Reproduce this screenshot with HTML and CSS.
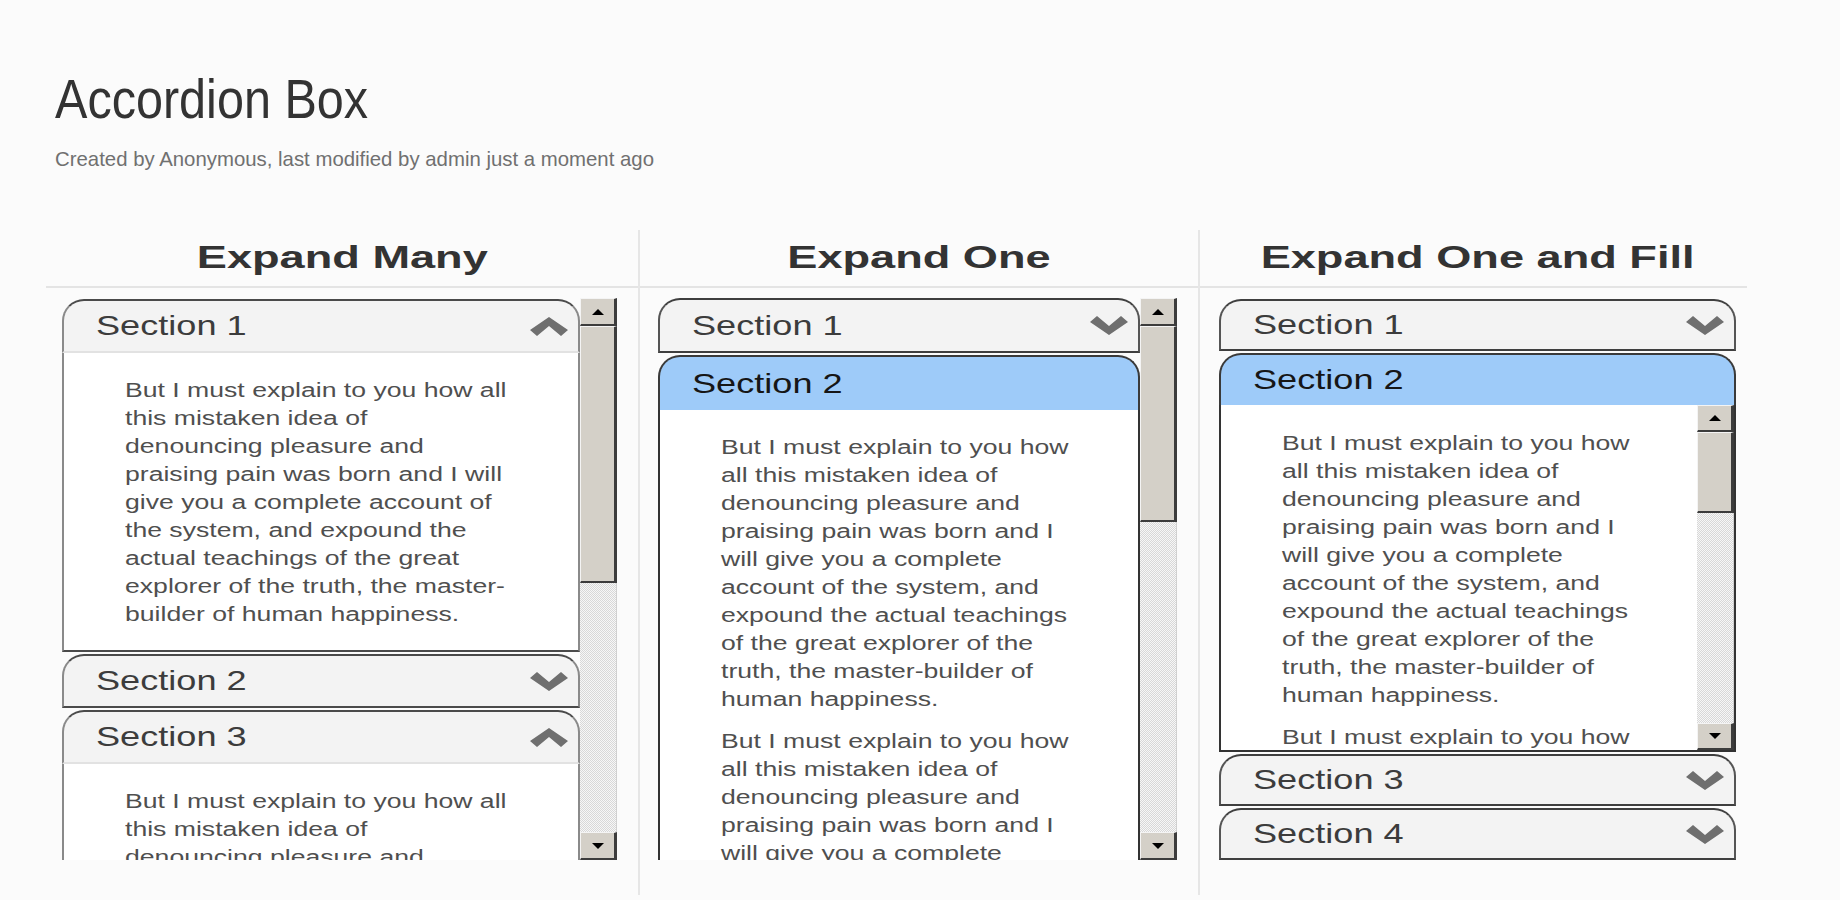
FILE: index.html
```html
<!DOCTYPE html>
<html lang="en">
<head>
<meta charset="utf-8">
<title>Accordion Box</title>
<link rel="stylesheet" href="styles.css">
</head>
<body>
<main class="page">
  <h1 class="title">Accordion Box</h1>
  <p class="meta">Created by Anonymous, last modified by admin just a moment ago</p>

  <div class="board">
    <!-- Column 1 -->
    <section class="col col-many">
      <h2 class="col-head"><span>Expand Many</span></h2>
      <div class="col-body">
        <div class="widget w-many">
          <div class="stack">
            <div class="sec open">
              <div class="sec-head">
                <span class="label">Section 1</span>
                <svg class="chev" viewBox="0 0 38 19"><polygon points="0,13 19,0 38,13 31,19 19,9 7,19"/></svg>
              </div>
              <div class="sec-body">
                <p class="txt">But I must explain to you how all<br>this mistaken idea of<br>denouncing pleasure and<br>praising pain was born and I will<br>give you a complete account of<br>the system, and expound the<br>actual teachings of the great<br>explorer of the truth, the master-<br>builder of human happiness.</p>
              </div>
            </div>
            <div class="sec closed">
              <div class="sec-head">
                <span class="label">Section 2</span>
                <svg class="chev" viewBox="0 0 38 19"><polygon points="0,6 7,0 19,10 31,0 38,6 19,19"/></svg>
              </div>
            </div>
            <div class="sec open">
              <div class="sec-head">
                <span class="label">Section 3</span>
                <svg class="chev" viewBox="0 0 38 19"><polygon points="0,13 19,0 38,13 31,19 19,9 7,19"/></svg>
              </div>
              <div class="sec-body">
                <p class="txt">But I must explain to you how all<br>this mistaken idea of<br>denouncing pleasure and</p>
              </div>
            </div>
          </div>
          <div class="sbar">
            <div class="sb-btn"><svg class="arrow" viewBox="0 0 12 6"><polygon points="0,6 6,0 12,6"/></svg></div>
            <div class="sb-thumb t-many"></div>
            <div class="sb-track"></div>
            <div class="sb-btn"><svg class="arrow" viewBox="0 0 12 6"><polygon points="0,0 12,0 6,6"/></svg></div>
          </div>
        </div>
      </div>
    </section>

    <!-- Column 2 -->
    <section class="col col-one">
      <h2 class="col-head"><span>Expand One</span></h2>
      <div class="col-body">
        <div class="widget w-one">
          <div class="stack">
            <div class="sec closed">
              <div class="sec-head">
                <span class="label">Section 1</span>
                <svg class="chev" viewBox="0 0 38 19"><polygon points="0,6 7,0 19,10 31,0 38,6 19,19"/></svg>
              </div>
            </div>
            <div class="sec sel">
              <div class="sec-head">
                <span class="label">Section 2</span>
              </div>
              <div class="sec-body">
                <p class="txt">But I must explain to you how<br>all this mistaken idea of<br>denouncing pleasure and<br>praising pain was born and I<br>will give you a complete<br>account of the system, and<br>expound the actual teachings<br>of the great explorer of the<br>truth, the master-builder of<br>human happiness.</p>
                <p class="txt">But I must explain to you how<br>all this mistaken idea of<br>denouncing pleasure and<br>praising pain was born and I<br>will give you a complete</p>
              </div>
            </div>
          </div>
          <div class="sbar">
            <div class="sb-btn"><svg class="arrow" viewBox="0 0 12 6"><polygon points="0,6 6,0 12,6"/></svg></div>
            <div class="sb-thumb t-one"></div>
            <div class="sb-track"></div>
            <div class="sb-btn"><svg class="arrow" viewBox="0 0 12 6"><polygon points="0,0 12,0 6,6"/></svg></div>
          </div>
        </div>
      </div>
    </section>

    <!-- Column 3 -->
    <section class="col col-fill">
      <h2 class="col-head"><span>Expand One and Fill</span></h2>
      <div class="col-body">
        <div class="widget w-fill">
          <div class="stack">
            <div class="sec closed">
              <div class="sec-head">
                <span class="label">Section 1</span>
                <svg class="chev" viewBox="0 0 38 19"><polygon points="0,6 7,0 19,10 31,0 38,6 19,19"/></svg>
              </div>
            </div>
            <div class="sec sel">
              <div class="sec-head">
                <span class="label">Section 2</span>
              </div>
              <div class="sec-body fill-body">
                <div class="fill-text">
                  <p class="txt">But I must explain to you how<br>all this mistaken idea of<br>denouncing pleasure and<br>praising pain was born and I<br>will give you a complete<br>account of the system, and<br>expound the actual teachings<br>of the great explorer of the<br>truth, the master-builder of<br>human happiness.</p>
                  <p class="txt">But I must explain to you how</p>
                </div>
                <div class="sbar mini">
                  <div class="sb-btn"><svg class="arrow" viewBox="0 0 12 6"><polygon points="0,6 6,0 12,6"/></svg></div>
                  <div class="sb-thumb t-fill"></div>
                  <div class="sb-track"></div>
                  <div class="sb-btn"><svg class="arrow" viewBox="0 0 12 6"><polygon points="0,0 12,0 6,6"/></svg></div>
                </div>
              </div>
            </div>
            <div class="sec closed">
              <div class="sec-head">
                <span class="label">Section 3</span>
                <svg class="chev" viewBox="0 0 38 19"><polygon points="0,6 7,0 19,10 31,0 38,6 19,19"/></svg>
              </div>
            </div>
            <div class="sec closed">
              <div class="sec-head">
                <span class="label">Section 4</span>
                <svg class="chev" viewBox="0 0 38 19"><polygon points="0,6 7,0 19,10 31,0 38,6 19,19"/></svg>
              </div>
            </div>
          </div>
        </div>
      </div>
    </section>
  </div>
</main>
</body>
</html>
```

FILE: styles.css
```css
html, body {
  margin: 0;
  padding: 0;
}

body {
  background: #fbfbfb;
  font-family: "Liberation Sans", Arial, sans-serif;
  color: #333;
  width: 1840px;
  height: 900px;
  overflow: hidden;
}

.page {
  padding: 67px 0 0 46px;
}

.title {
  margin: 0 0 0 9px;
  font-size: 56px;
  line-height: 64px;
  font-weight: normal;
  color: #333;
  width: max-content;
  transform: scaleX(0.867);
  transform-origin: left center;
}

.meta {
  margin: 16px 0 0 9px;
  font-size: 21px;
  line-height: 24px;
  color: #707070;
  width: max-content;
  transform: scaleX(0.97);
  transform-origin: left center;
}

/* board of three columns */
.board {
  margin-top: 59px;
  display: grid;
  grid-template-columns: 592px 560px 549px;
  height: 665px;
}

.col {
  display: flex;
  flex-direction: column;
  min-width: 0;
}

.col + .col {
  border-left: 2px solid #e6e6e6;
}

.col-head {
  margin: 0;
  box-sizing: border-box;
  height: 58px;
  padding-top: 7px;
  border-bottom: 2px solid #e4e4e4;
  text-align: center;
  font-size: 30.5px;
  line-height: 40px;
  font-weight: bold;
  color: #333;
}

.col-head span {
  display: inline-block;
  transform: scaleX(1.48);
  transform-origin: center center;
}

.col-fill .col-head {
  padding-left: 8px;
}

.col-body {
  padding-top: 10px;
}

.col-many .col-body { padding-left: 16px; }
.col-one .col-body { padding-left: 18px; }
.col-fill .col-body { padding-left: 19px; padding-top: 11px; }

/* accordion widget */
.widget {
  display: flex;
  overflow: hidden;
}

.w-many {
  width: 555px;
  height: 562px;
  --hh: 50px;
  --side: #8a8a8a;
  --top: #4a4a4a;
}

.w-one {
  width: 519px;
  height: 562px;
  --hh: 51px;
  --side: #555;
  --top: #3f3f3f;
}

.w-fill {
  width: 517px;
  --hh: 48px;
  --side: #555;
  --top: #3f3f3f;
}

.stack {
  flex: 1;
  min-width: 0;
  display: flex;
  flex-direction: column;
  gap: 2px;
}

.w-many .stack {
  padding-top: 1px;
}

.sec-head {
  box-sizing: content-box;
  height: var(--hh);
  border: 2px solid var(--side);
  border-top-color: var(--top);
  border-bottom-color: var(--top);
  border-radius: 22px 22px 0 0;
  background: #f3f3f3;
  display: flex;
  align-items: center;
  justify-content: space-between;
  padding: 0 10px 0 32px;
}

.open > .sec-head {
  border-bottom-color: #e2e2e2;
}

.sel > .sec-head {
  background: #9ecbf9;
  border-color: #3a3a3a;
  border-bottom: 0;
  height: calc(var(--hh) + 2px);
}

.label {
  display: inline-block;
  font-size: 28px;
  line-height: 1;
  color: #3c3c3c;
  white-space: nowrap;
  transform: scaleX(1.29);
  transform-origin: left center;
}

.sel .label {
  color: #161616;
}

.chev {
  width: 38px;
  height: 19px;
  flex: none;
  fill: #6f6f6f;
}

.sec-body {
  background: #fff;
  border: 2px solid var(--side);
  border-top: 0;
  border-bottom-color: var(--top);
  padding: 23px 0 22px 61px;
}

.sel > .sec-body {
  border-color: #333;
}

.txt {
  margin: 0;
  width: max-content;
  font-size: 20px;
  line-height: 28px;
  color: #4f4f4f;
  white-space: nowrap;
  transform: scaleX(1.33);
  transform-origin: 0 0;
}

.txt + .txt {
  margin-top: 14px;
}

/* Expand One and Fill: fixed-height body with inner scrollbar */
.fill-body {
  box-sizing: border-box;
  height: 347px;
  padding: 0;
  display: flex;
  overflow: hidden;
}

.fill-text {
  flex: 1;
  min-width: 0;
  overflow: hidden;
  padding: 24px 0 0 61px;
}

/* classic scrollbar */
.sbar {
  flex: none;
  width: 37px;
  display: flex;
  flex-direction: column;
}

.sb-btn,
.sb-thumb {
  flex: none;
  box-sizing: border-box;
  background: #d4d0c8;
  border-style: solid;
  border-width: 1px 3px 2px 1px;
  border-color: #f4f4f4 #3c3c3c #3c3c3c #f4f4f4;
}

.sb-btn {
  height: 28px;
  display: flex;
  align-items: center;
  justify-content: center;
}

.mini .sb-btn {
  height: 27px;
}

.arrow {
  width: 12px;
  height: 6px;
  fill: #000;
}

.t-many { height: 257px; }
.t-one { height: 196px; }
.t-fill { height: 81px; }

.sb-track {
  flex: 1;
  background: repeating-conic-gradient(#d8d8d8 0 25%, #f7f7f7 0 50%) 0 0 / 2px 2px;
  border-right: 1px solid #d0d0d0;
}
```
